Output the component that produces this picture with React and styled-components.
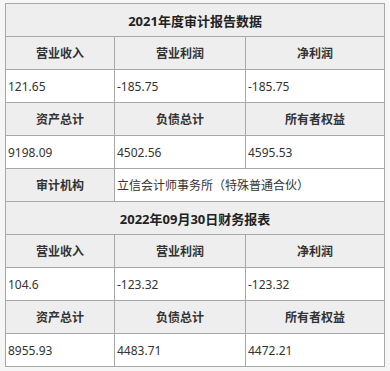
import React from 'react'
import styled, { createGlobalStyle } from 'styled-components'

const GlobalStyle = createGlobalStyle`
  html, body {
    margin: 0;
    padding: 0;
    background: #f6f6f6;
  }
  body {
    font-family: "Noto Sans", "Noto Sans CJK SC", sans-serif;
    color: #333;
  }
`

const Page = styled.div`
  padding: 3px 6px 0 5px;
`

const Table = styled.table`
  width: 379px;
  border-collapse: collapse;
  table-layout: fixed;
  border: 1px solid #a3a3a3;
`

const Row = styled.tr`
  height: 33px;
`

const Title = styled.th`
  background: #eeeeee;
  border: 1px solid #a8a8a8;
  font-size: 13px;
  font-weight: bold;
  text-align: center;
  padding: 0;
  color: #222;
`

const Head = styled.th`
  background: #eeeeee;
  border: 1px solid #a8a8a8;
  font-size: 12px;
  font-weight: bold;
  text-align: center;
  padding: 0;
  color: #333;
`

const Cell = styled.td`
  background: #ffffff;
  border: 1px solid #a8a8a8;
  font-size: 12px;
  text-align: left;
  padding: 0 0 0 2px;
  color: #333;
  white-space: nowrap;
`

const sections = [
  {
    title: '2021年度审计报告数据',
    rows: [
      ['营业收入', '营业利润', '净利润'],
      ['121.65', '-185.75', '-185.75'],
      ['资产总计', '负债总计', '所有者权益'],
      ['9198.09', '4502.56', '4595.53'],
    ],
    auditor: '立信会计师事务所（特殊普通合伙）',
  },
  {
    title: '2022年09月30日财务报表',
    rows: [
      ['营业收入', '营业利润', '净利润'],
      ['104.6', '-123.32', '-123.32'],
      ['资产总计', '负债总计', '所有者权益'],
      ['8955.93', '4483.71', '4472.21'],
    ],
  },
]

const App = () => (
  <Page>
    <GlobalStyle />
    <Table>
      <colgroup>
        <col style={{ width: 109 }} />
        <col style={{ width: 131 }} />
        <col style={{ width: 139 }} />
      </colgroup>
      <tbody>
        {sections.map(section => (
          <React.Fragment key={section.title}>
            <Row>
              <Title colSpan={3}>{section.title}</Title>
            </Row>
            {section.rows.map((row, i) => (
              <Row key={i}>
                {row.map((text, j) =>
                  i % 2 === 0
                    ? <Head key={j}>{text}</Head>
                    : <Cell key={j}>{text}</Cell>
                )}
              </Row>
            ))}
            {section.auditor && (
              <Row>
                <Head>审计机构</Head>
                <Cell colSpan={2}>{section.auditor}</Cell>
              </Row>
            )}
          </React.Fragment>
        ))}
      </tbody>
    </Table>
  </Page>
)

export default App
